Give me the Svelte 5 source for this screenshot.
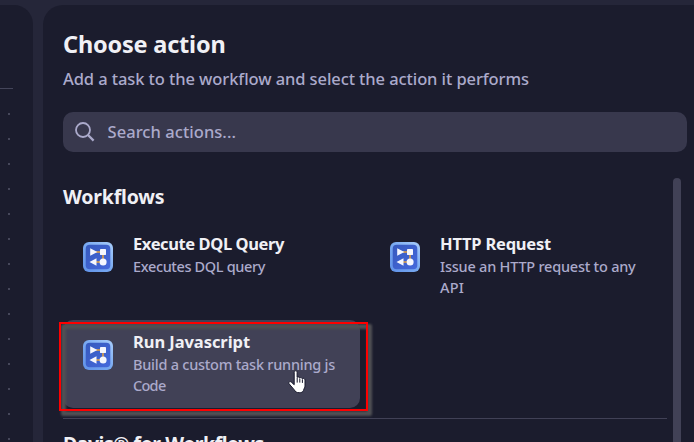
<script>
  const actions = [
    { title: 'Execute DQL Query', width: 151, lines: [['Executes DQL query', 132]] },
    { title: 'HTTP Request', width: 111, lines: [['Issue an HTTP request to any', 195.5], ['API', 24]] },
    { title: 'Run Javascript', width: 117, lines: [['Build a custom task running js', 202], ['Code', 32.5]], hovered: true }
  ];
  const dots = Array.from({ length: 14 });

  // Tracks a line of text so that it takes up the given width.
  function fit(node, width) {
    const natural = node.getBoundingClientRect().width;
    node.style.letterSpacing = `${(width - natural) / node.textContent.length}px`;
  }
</script>

{#snippet flowIcon()}
  <svg class="flow" width="30" height="30" viewBox="0 0 30 30" aria-hidden="true">
    <defs>
      <linearGradient id="rim" x1="1" y1="0" x2="0" y2="1">
        <stop offset="0" stop-color="#a9cdfa" />
        <stop offset="0.5" stop-color="#78a9f1" />
        <stop offset="1" stop-color="#5f91e8" />
      </linearGradient>
      <linearGradient id="face" x1="0" y1="0" x2="1" y2="1">
        <stop offset="0" stop-color="#3659bd" />
        <stop offset="1" stop-color="#4569dc" />
      </linearGradient>
    </defs>
    <rect width="30" height="30" rx="6" fill="url(#rim)" />
    <rect x="2.7" y="2.7" width="24.6" height="24.6" rx="4" fill="url(#face)" />
    <path d="M13 10h7v10h-7" fill="none" stroke="#e7a23c" stroke-width="1.5" />
    <path d="M7.2 6.3 14.4 10 7.2 13.8zM13.5 16.3v7.4L6.5 20z" fill="#f5f7ff" />
    <rect x="17" y="7" width="6" height="6" rx=".4" fill="#f5f7ff" />
    <circle cx="20.1" cy="20" r="3.5" fill="#f5f7ff" />
  </svg>
{/snippet}

<div class="screen">
  <aside class="canvas">
    <div class="rule"></div>
    <div class="dots">
      {#each dots as _}<i></i>{/each}
    </div>
  </aside>

  <main class="panel">
    <h1><span use:fit={162.5}>Choose action</span></h1>
    <p class="intro"><span use:fit={466}>Add a task to the workflow and select the action it performs</span></p>

    <div class="search">
      <svg width="22" height="22" viewBox="0 0 22 22" fill="none" stroke="#abaacb" aria-hidden="true">
        <circle cx="9" cy="9" r="7" stroke-width="1.8" />
        <path d="m14 14 5.6 5.6" stroke-width="2.3" />
      </svg>
      <span use:fit={128.5}>Search actions...</span>
    </div>

    <div class="results">
      <div class="list">
        <h2><span use:fit={101.5}>Workflows</span></h2>
        <div class="grid">
          {#each actions as action}
            <div class="card" class:hovered={action.hovered}>
              {@render flowIcon()}
              <div class="copy">
                <h3><span use:fit={action.width}>{action.title}</span></h3>
                {#each action.lines as [text, width]}
                  <p><span use:fit={width}>{text}</span></p>
                {/each}
              </div>
            </div>
          {/each}
        </div>
        <div class="divider"></div>
        <h2 class="next"><span use:fit={201}>Davis® for Workflows</span></h2>
      </div>
      <div class="scrollbar"></div>
    </div>
  </main>

  <div class="shade"></div>
  <div class="highlight"></div>
  <svg class="cursor" width="20" height="26" viewBox="0 0 20 26" aria-hidden="true">
    <path d="M6.2 2.3c0-2 2.9-2 2.9 0v5.2c.5-.9 2.4-.7 2.6.5.6-.8 2.3-.5 2.6.7.8-.8 2.7-.3 2.7 1.2v6.2c0 1.5-1.2 2.6-1.5 4.3-.7 1.8-2.1 2.3-4.3 2.3-2.7 0-4-1.1-4.9-2.8L1 13.7c-.8-1.6 1-2.9 2.4-1.5l2.8 2.5z" fill="#fff" stroke="#16172b" stroke-width="1" />
    <path d="M9.2 8v4.6M11.8 8.5v4.1M14.4 9.3v3.6" stroke="#16172b" stroke-width="1" />
  </svg>
</div>

<style>
  :global(body) { background: #252639; }
  .screen {
    position: relative;
    box-sizing: border-box;
    width: 694px;
    height: 442px;
    padding-top: 5px;
    display: flex;
    gap: 10px;
    overflow: hidden;
    background: #252639;
    color: #f0f0f5;
    font-family: "Noto Sans", Roboto, sans-serif;
    font-weight: 500;
  }
  h1, h2, h3, p { margin: 0; white-space: nowrap; }
  .canvas {
    width: 33px;
    flex: none;
    background: #1b1c2d;
    border-top-right-radius: 19px;
  }
  .rule { width: 13px; height: 1px; margin-top: 83px; background: #44455a; }
  .dots {
    display: flex;
    flex-direction: column;
    gap: 23px;
    padding: 24px 0 0 8px;
  }
  .dots i { width: 2px; height: 2px; background: #46475a; }
  .panel {
    box-sizing: border-box;
    width: 651px;
    flex: none;
    padding: 23px 7px 0 20px;
    background: #1b1c2d;
    border-top-left-radius: 20px;
    display: flex;
    flex-direction: column;
  }
  h1 { font-size: 23.5px; line-height: 32px; font-weight: 700; }
  .intro {
    margin-top: 7px;
    font-size: 16.5px;
    line-height: 24px;
    color: #abaacb;
  }
  .search {
    flex: none;
    height: 40px;
    margin-top: 21px;
    padding-left: 11px;
    display: flex;
    align-items: center;
    gap: 11.5px;
    border-radius: 10px;
    background: #38384d;
    color: #abaacb;
    font-size: 16.5px;
    white-space: nowrap;
    box-sizing: border-box;
  }
  .search span { padding-bottom: 2px; }
  .results {
    flex: 1;
    min-height: 0;
    margin-top: 26px;
    display: flex;
    gap: 6px;
  }
  .list { width: 604px; }
  h2 { font-size: 19.5px; line-height: 26px; font-weight: 700; margin-top: 6px; }
  .grid {
    display: grid;
    grid-template-columns: 297px 297px;
    grid-auto-rows: 88px;
    gap: 10px;
    margin-top: 12px;
  }
  .card {
    box-sizing: border-box;
    display: flex;
    gap: 20px;
    padding: 10px 20px;
    border-radius: 10px;
  }
  .hovered { background: #414156; }
  .flow { flex: none; margin-top: 10px; }
  h3 { font-size: 16.5px; line-height: 24px; font-weight: 700; }
  .card p { font-size: 14.5px; line-height: 21px; color: #abaacb; }
  .divider { height: 1px; margin-top: 10px; background: #414156; }
  .next { margin-top: 12px; }
  .scrollbar {
    width: 8px;
    border-radius: 4px 4px 0 0;
    background: #414156;
  }
  .shade {
    position: absolute;
    left: 61px;
    top: 324px;
    width: 301px;
    height: 82px;
    border: 5px solid #505054;
    border-radius: 2px;
    filter: blur(0.8px);
  }
  .highlight {
    position: absolute;
    left: 59px;
    top: 322px;
    width: 305px;
    height: 85px;
    border: 2px solid #fe0000;
  }
  .cursor { position: absolute; left: 288px; top: 370px; }
</style>
